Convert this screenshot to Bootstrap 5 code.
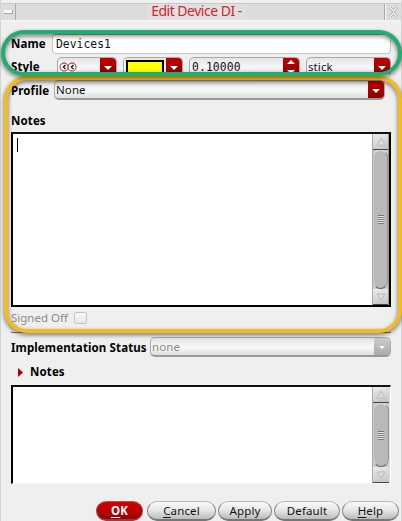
<!DOCTYPE html>
<html lang="en">
<head>
<meta charset="utf-8">
<meta name="viewport" content="width=device-width, initial-scale=1">
<title>Edit Device DI</title>
<link href="https://cdn.jsdelivr.net/npm/bootstrap@5.3.0/dist/css/bootstrap.min.css" rel="stylesheet">
<style>
body{width:402px;height:521px;background:#efefef;color:#111;font:11.5px/16px "Noto Sans","Open Sans",sans-serif;overflow:hidden}
.dialog{width:402px;height:521px;border-left:1px solid #d4d4d4;border-right:1px solid #d4d4d4}
.title-bar{height:18px;margin-top:3px;background:#dcdcdc;border-top:1px solid #c8c8c8;border-bottom:1px solid #f7f7f7}
.win-btn{width:15px;border-right:1px solid #aaa}
.win-btn.end{width:17px;border-right:0;border-left:1px solid #aaa;box-shadow:inset 1px 0 #f5f5f5}
.dash{width:9px;height:4px;background:#f8f8f8;border-right:1px solid #aaa;border-bottom:1px solid #aaa}
.title-text{color:#d52329;font-size:14px;letter-spacing:-.5px;line-height:14px;background:#e0e0e0;padding:0 4px;margin-right:7px}
.form-area{padding:13px 10px 0 10px}
.lbl{font-weight:700;font-size:11.5px;letter-spacing:.12px;white-space:nowrap;color:#000}
.mono{font:11.4px/16px "DejaVu Sans Mono",monospace}
.field{background:#fff;border:1px solid #c5c5c5;border-top-color:#999;border-radius:4px}
.name-field{height:20px;padding:0 3px;line-height:19px}
.style-row{height:17px;overflow:hidden;margin-top:3px}
.pick{height:20px;border:1px solid #aaa;border-bottom:2px solid #999;border-radius:5px;background:linear-gradient(#e4e4e4,#f8f8f8 55%,#dedede);overflow:hidden}
.pick .txt{padding-left:1px;line-height:18px;letter-spacing:.1px}
.pick .mono{padding-left:2px;line-height:19px}
.arrow{width:16px;background:linear-gradient(#c40000,#8d0000);flex:none}
.arrow.off{background:linear-gradient(#ccc,#aaa)}
.swatch{height:18px;margin:2px 2px 0 2px;border:2px solid #000;background:#ff0}
.memo{border:2px solid #000;border-top-color:#111;background:#fff}
.memo-a{height:175px}
.memo-b{height:99px;border-right:1px solid #fff;border-bottom:1px solid #f8f8f8}
.caret{width:1px;height:14px;background:#000;margin:4px 0 0 4px}
.sbar{width:16px;background:#cbcbcb;border-left:1px solid #aaa}
.memo-a .sbar{border-right:1px solid #999;width:17px}
.memo-b .sbar{border-right:1px solid #ddd;width:18px}
.sbtn{height:16px;background:linear-gradient(160deg,#ededed,#c3c3c3);border-bottom:1px solid #444;flex:none}
.thumb{background:#b9b9b9;border:1px solid #969696;border-top-color:#ddd;border-left-color:#ccc;border-bottom:1px solid #666;border-radius:8px}
.grip{width:6px;height:9px;background:repeating-linear-gradient(#777 0 1px,#e6e6e6 1px 2px)}
.muted{color:#8a8a8a}
.chk{width:13px;height:12px;margin-left:6px;border:1px solid #c4c4c4;border-radius:2px;background:linear-gradient(#f9f9f9,#e8e8e8)}
.rule{height:1px;background:#777}
.pill{height:20px;padding:0;border:1px solid #888;border-top-color:#bbb;border-bottom:2px solid #777;border-radius:10px;background:linear-gradient(#fafafa,#e8e8e8 45%,#bcbcbc);color:#111;font-size:11.5px;letter-spacing:.15px;line-height:18px}
.pill u{text-underline-offset:2px}
.pill.ok{background:linear-gradient(#d40000,#a00000);border-color:#b55 #944 #844;color:#fff;font-weight:700}
.ring{position:absolute;border:4px solid;pointer-events:none;filter:drop-shadow(0 2px 2px rgba(0,0,0,.55))}
.ring-green{left:1px;top:30px;width:401px;height:46px;border-color:#22ac72;border-radius:23px}
.ring-yellow{left:4px;top:76px;width:398px;height:257px;border-color:#f3bb22;border-radius:23px}
</style>
<script src="https://cdn.jsdelivr.net/npm/bootstrap@5.3.0/dist/js/bootstrap.bundle.min.js"></script>
</head>
<body class="m-0 position-relative">
<main class="dialog d-flex flex-column">
  <header class="title-bar d-flex align-items-stretch">
    <div class="win-btn d-flex align-items-center justify-content-center"><span class="dash"></span></div>
    <div class="flex-fill d-flex justify-content-center"><span class="title-text">Edit Device DI -</span></div>
    <div class="win-btn end d-flex align-items-center justify-content-center">
      <svg width="11" height="12" viewBox="0 0 11 12"><path d="M2 1.5 5.5 5 9 1.5M2 10.5 5.5 7 9 10.5" fill="none" stroke="#aaa" stroke-width="3"/><path d="M2 1.5 5.5 5 9 1.5M2 10.5 5.5 7 9 10.5" fill="none" stroke="#f2f2f2" stroke-width="1.5"/></svg>
    </div>
  </header>
  <div class="form-area">
    <div class="d-flex align-items-center">
      <span class="lbl" style="width:41px">Name</span>
      <div class="field name-field mono flex-fill">Devices1</div>
    </div>
    <div class="style-row d-flex">
      <span class="lbl" style="width:46px;padding-top:2px">Style</span>
      <div class="pick d-flex" style="width:60px">
        <svg width="42" height="18" viewBox="0 0 42 18"><path d="M1 4h17v11H1z" fill="#fff"/><g fill="none" stroke="#b0606c" stroke-width="1.3"><circle cx="6" cy="9" r="4"/><circle cx="14" cy="9" r="4"/></g><path d="M7.500 7 5.500 9l2 2M15.500 7l-2 2 2 2" fill="none" stroke="#222" stroke-width="1.6"/></svg>
        <span class="arrow"><svg width="16" height="18"><path d="M4 8h8l-4 4z" fill="#fff"/></svg></span>
      </div>
      <div class="pick d-flex" style="width:60px;margin-left:6px">
        <div class="swatch flex-fill"></div>
        <span class="arrow"><svg width="16" height="18"><path d="M4 8h8l-4 4z" fill="#fff"/></svg></span>
      </div>
      <div class="pick bg-white d-flex" style="width:111px;margin-left:6px">
        <span class="txt mono flex-fill">0.10000</span>
        <span class="arrow"><svg width="16" height="18"><path d="M4 6h8l-4-4zM4 12h8l-4 4z" fill="#fff"/></svg></span>
      </div>
      <div class="pick d-flex" style="width:85px;margin-left:6px">
        <span class="txt flex-fill">stick</span>
        <span class="arrow"><svg width="16" height="18"><path d="M4 8h8l-4 4z" fill="#fff"/></svg></span>
      </div>
    </div>
    <div class="d-flex" style="margin-top:6px">
      <span class="lbl" style="width:43px;padding-top:3px">Profile</span>
      <div class="pick d-flex" style="width:331px">
        <span class="txt flex-fill">None</span>
        <span class="arrow"><svg width="16" height="18"><path d="M4 8h8l-4 4z" fill="#fff"/></svg></span>
      </div>
    </div>
    <div class="lbl" style="margin:13px 0 3px">Notes</div>
    <div class="memo memo-a d-flex justify-content-between">
      <div class="caret"></div>
      <div class="sbar d-flex flex-column">
        <div class="sbtn"><svg class="d-block" width="15" height="15"><path d="M4 11h8L8 4z" fill="#ddd" stroke="#bbb"/></svg></div>
        <div class="thumb flex-fill d-flex align-items-center justify-content-center"><span class="grip"></span></div>
        <div class="sbtn"><svg class="d-block" width="15" height="15"><path d="M4 5h8l-4 6z" fill="#ddd" stroke="#bbb"/></svg></div>
      </div>
    </div>
    <div class="d-flex align-items-center muted" style="margin-top:3px">
      <span>Signed Off</span><span class="chk"></span>
    </div>
    <div class="rule" style="margin-top:6px"></div>
    <div class="d-flex" style="margin-top:4px">
      <span class="lbl" style="width:139px;padding-top:3px">Implementation Status</span>
      <div class="pick d-flex flex-fill muted">
        <span class="txt flex-fill">none</span>
        <span class="arrow off"><svg width="16" height="18"><path d="M5 8h6l-3 3z" fill="#fff"/></svg></span>
      </div>
    </div>
    <div class="d-flex align-items-center" style="margin:7px 0 5px 7px">
      <svg width="5" height="9"><path d="M0 0 5 4.500 0 9z" fill="#b80000"/></svg>
      <span class="lbl" style="margin-left:7px">Notes</span>
    </div>
    <div class="memo memo-b d-flex justify-content-end">
      <div class="sbar d-flex flex-column">
        <div class="sbtn"><svg class="d-block" width="15" height="15"><path d="M4 11h8L8 4z" fill="#ddd" stroke="#bbb"/></svg></div>
        <div class="thumb flex-fill d-flex align-items-center justify-content-center"><span class="grip"></span></div>
        <div class="sbtn"><svg class="d-block" width="15" height="15"><path d="M4 5h8l-4 6z" fill="#ddd" stroke="#bbb"/></svg></div>
      </div>
    </div>
  </div>
  <footer class="d-flex mt-auto justify-content-end" style="padding-right:2px;gap:2px">
    <button class="btn pill ok" style="width:47px;margin-right:2px"><u>O</u>K</button>
    <button class="btn pill" style="width:69px"><u>C</u>ancel</button>
    <button class="btn pill" style="width:54px">Apply</button>
    <button class="btn pill" style="width:66px">Default</button>
    <button class="btn pill" style="width:57px"><u>H</u>elp</button>
  </footer>
</main>
<div class="ring ring-yellow"></div>
<div class="ring ring-green"></div>
</body>
</html>
